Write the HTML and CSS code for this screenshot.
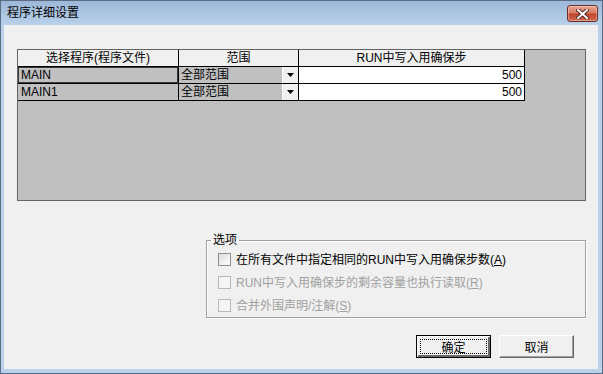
FILE: index.html
```html
<!DOCTYPE html>
<html>
<head>
	<title>程序详细设置</title>
	<meta charset="utf-8">
	<link rel="stylesheet" href="styles.css">
</head>
<body>

	<div class="window">

		<div class="titlebar">
			<span class="title">程序详细设置</span>
			<div class="close-btn">
				<svg width="13" height="10" viewBox="0 0 13 10">
					<path d="M2 1 L11 9 M11 1 L2 9" stroke="#5a2a22" stroke-width="4" stroke-linecap="square"/>
					<path d="M2 1 L11 9 M11 1 L2 9" stroke="#ffffff" stroke-width="2" stroke-linecap="square"/>
				</svg>
			</div>
		</div>

		<div class="client">

			<div class="grid">
				<div class="grid-row header">
					<div class="cell c1">选择程序(程序文件)</div>
					<div class="cell c2">范围</div>
					<div class="cell c3">RUN中写入用确保步</div>
				</div>
				<div class="grid-row">
					<div class="cell c1 name focused">MAIN</div>
					<div class="cell c2 range">
						<span>全部范围</span>
						<span class="drop"><svg width="7" height="4" viewBox="0 0 7 4"><polygon points="0,0 7,0 3.5,4" fill="#000"/></svg></span>
					</div>
					<div class="cell c3 steps">500</div>
				</div>
				<div class="grid-row">
					<div class="cell c1 name">MAIN1</div>
					<div class="cell c2 range">
						<span>全部范围</span>
						<span class="drop"><svg width="7" height="4" viewBox="0 0 7 4"><polygon points="0,0 7,0 3.5,4" fill="#000"/></svg></span>
					</div>
					<div class="cell c3 steps">500</div>
				</div>
			</div>

			<fieldset class="options">
				<legend>选项</legend>
				<div class="check"><span class="box"></span>在所有文件中指定相同的RUN中写入用确保步数(<u>A</u>)</div>
				<div class="check disabled"><span class="box"></span>RUN中写入用确保步的剩余容量也执行读取(<u>R</u>)</div>
				<div class="check disabled"><span class="box"></span>合并外围声明/注解(<u>S</u>)</div>
			</fieldset>

			<div class="buttons">
				<button class="btn default"><span class="focus">确定</span></button>
				<button class="btn">取消</button>
			</div>

		</div>
	</div>

</body>
</html>
```

FILE: styles.css
```css
* {
	box-sizing: border-box;
}

html, body {
	margin: 0;
	height: 100%;
}

body {
	font-family: "Liberation Sans", "Noto Sans CJK SC", sans-serif;
	font-size: 12px;
	color: #000;
}

.window {
	width: 603px;
	height: 374px;
	display: flex;
	flex-direction: column;
	background-color: #b9d1ea;
	border: 1px solid #5b6d85;
}

/* title bar */
.titlebar {
	height: 24px;
	display: flex;
	align-items: flex-start;
	padding-left: 6px;
	background: linear-gradient(#9cb7d8, #b9d1ea);
}

.title {
	margin-top: 5px;
	font-size: 12px;
	line-height: 14px;
}

.close-btn {
	margin-left: auto;
	margin-right: 4px;
	margin-top: 4px;
	width: 31px;
	height: 17px;
	border: 1px solid #6b2e25;
	border-radius: 3px;
	background: linear-gradient(#e8a493 0%, #d67a63 45%, #c2452d 55%, #cf6a4f 100%);
	box-shadow: inset 0 0 0 1px rgba(255, 255, 255, 0.35);
	display: flex;
	align-items: center;
	justify-content: center;
}

/* client area */
.client {
	flex: 1;
	margin: 0 4px 4px 3px;
	padding: 24px 12px 0 13px;
	background-color: #f0f0f0;
	display: flex;
	flex-direction: column;
}

.grid {
	height: 152px;
	border: 1px solid #646464;
	background-color: #c0c0c0;
}

.grid-row {
	display: flex;
	height: 17px;
}

.cell {
	height: 17px;
	line-height: 16px;
	border-right: 1px solid #000;
	border-bottom: 1px solid #000;
	white-space: nowrap;
	overflow: hidden;
}

.c1 { width: 161px; }
.c2 { width: 120px; }
.c3 { width: 226px; }

.header .cell {
	background-color: #f0f0f0;
	text-align: center;
}

.name {
	padding-left: 3px;
	background-color: #c0c0c0;
}

.focused {
	box-shadow: inset 0 0 0 1px #3a3a3a;
}

.range {
	display: flex;
	padding-left: 2px;
	background-color: #c0c0c0;
}

.drop {
	margin-left: auto;
	width: 16px;
	height: 16px;
	background-color: #f0f0f0;
	border-left: 1px solid #fff;
	display: flex;
	align-items: center;
	justify-content: center;
}

.steps {
	background-color: #fff;
	text-align: right;
	padding-right: 2px;
}

/* options group */
.options {
	margin: 32px 0 0 189px;
	padding: 1px 0 0 4px;
	height: 85px;
	border: 1px solid #a0a0a0;
	box-shadow: 1px 1px 0 #fff, inset 1px 1px 0 #fff;
}

.options legend {
	padding: 0 2px;
	line-height: 14px;
}

.check {
	height: 23px;
	display: flex;
	align-items: center;
	padding-left: 7px;
	line-height: 14px;
}

.box {
	width: 13px;
	height: 13px;
	margin-right: 5px;
	border: 1px solid #8e8f8f;
	background: linear-gradient(135deg, #dcdcdc, #fff);
}

.disabled {
	color: #a0a0a0;
}

.disabled .box {
	border-color: #b8b8b8;
	background: #f4f4f4;
}

/* buttons */
.buttons {
	display: flex;
	justify-content: flex-end;
	gap: 8px;
	margin-top: 17px;
	margin-right: 12px;
}

.btn {
	width: 75px;
	height: 23px;
	padding: 0;
	font-family: "Liberation Sans", "Noto Sans CJK SC", sans-serif;
	font-size: 12px;
	color: #000;
	background-color: #f0f0f0;
	border: 1px solid;
	border-color: #fff #696969 #696969 #fff;
	box-shadow: inset -1px -1px 0 #a0a0a0;
	display: flex;
	align-items: center;
	justify-content: center;
}

.btn.default {
	border-color: #000;
	box-shadow: inset 1px 1px 0 #fff, inset -2px -2px 0 #696969;
	padding: 3px;
}

.focus {
	flex: 1;
	align-self: stretch;
	border: 1px dotted #000;
	display: flex;
	align-items: center;
	justify-content: center;
}
```
